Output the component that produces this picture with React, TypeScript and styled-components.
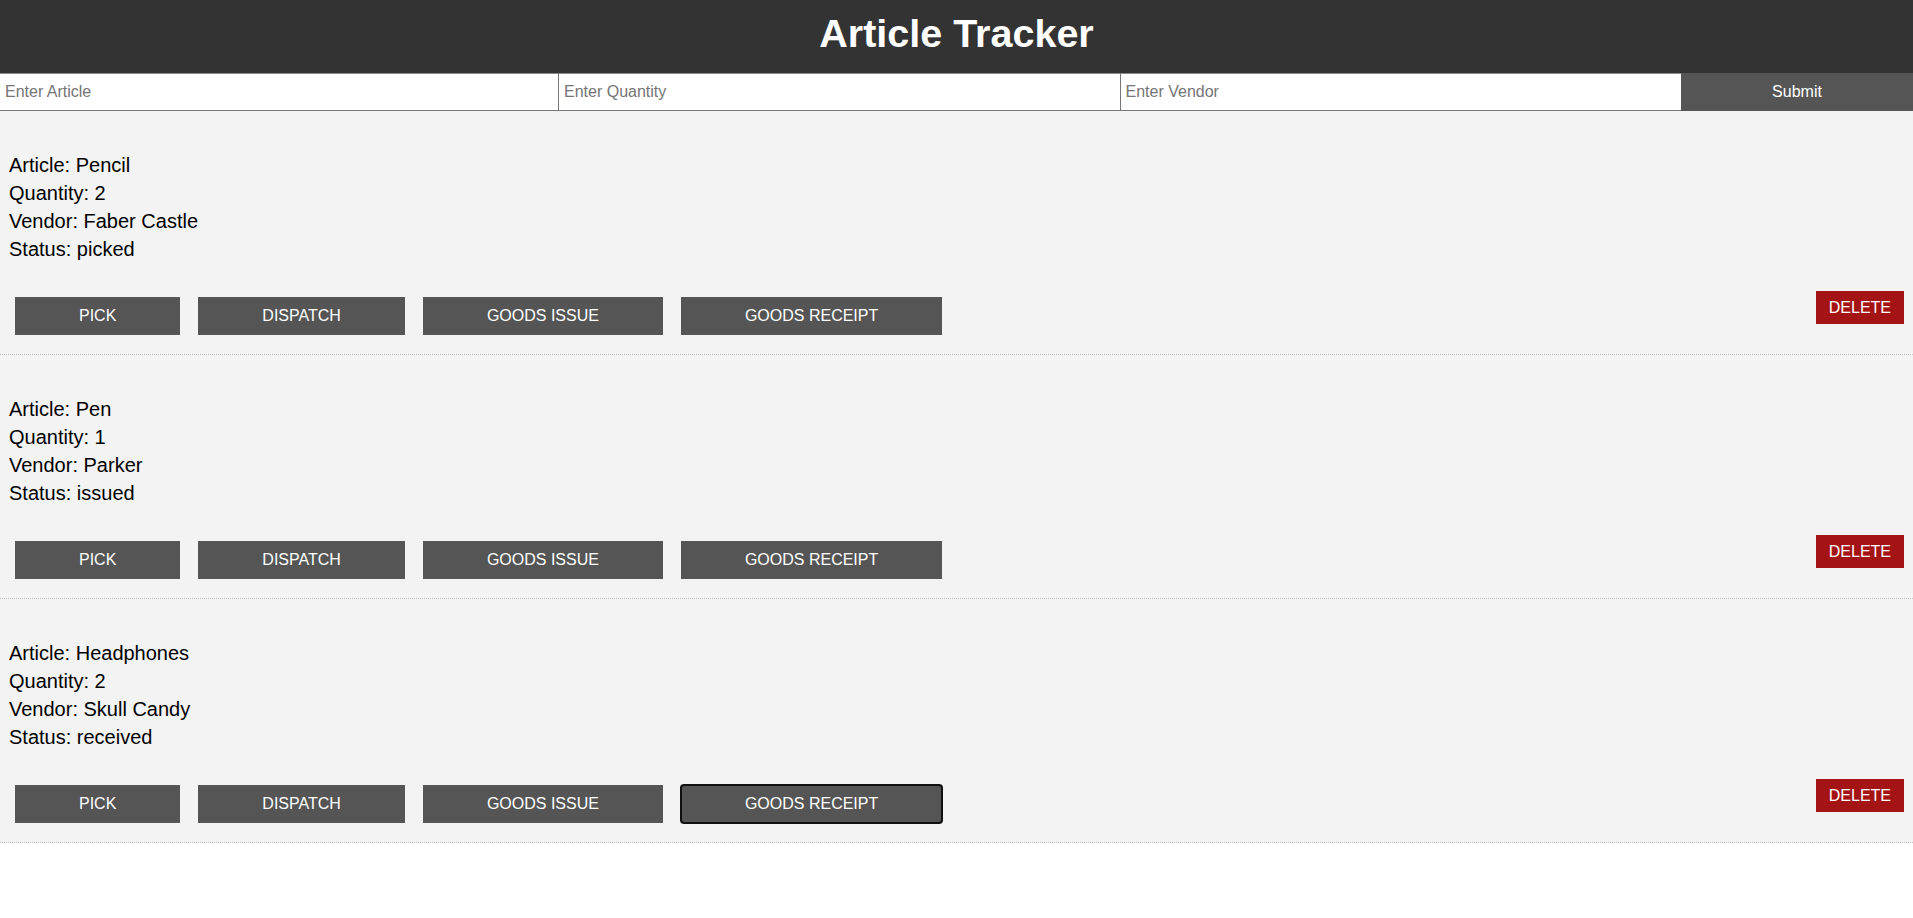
import React from 'react';
import styled, { createGlobalStyle } from 'styled-components';

const GlobalStyle = createGlobalStyle`
  html, body {
    margin: 0;
    padding: 0;
    background: #ffffff;
    font-family: "Liberation Sans", Arial, sans-serif;
  }
`;

type Article = {
  name: string;
  quantity: number;
  vendor: string;
  status: string;
};

const articles: Article[] = [
  { name: 'Pencil', quantity: 2, vendor: 'Faber Castle', status: 'picked' },
  { name: 'Pen', quantity: 1, vendor: 'Parker', status: 'issued' },
  { name: 'Headphones', quantity: 2, vendor: 'Skull Candy', status: 'received' },
];

const actions = ['PICK', 'DISPATCH', 'GOODS ISSUE', 'GOODS RECEIPT'];

const Header = styled.header`
  box-sizing: border-box;
  height: 73px;
  padding-top: 14px;
  background: #333333;
  display: flex;
  align-items: flex-start;
  justify-content: center;
`;

const Title = styled.h1`
  margin: 0;
  color: #ffffff;
  font-size: 39.5px;
  font-weight: 700;
  line-height: 1;
`;

const Form = styled.form`
  display: grid;
  grid-template-columns: 558px 1fr 1fr 232px;
  height: 38px;
`;

const Input = styled.input`
  box-sizing: border-box;
  height: 38px;
  margin: 0;
  padding: 0 5px;
  border: none;
  border-top: 1px solid #8a8a8a;
  border-bottom: 1px solid #767676;
  border-left: 1px solid #767676;
  background: #ffffff;
  font-family: "Liberation Sans", Arial, sans-serif;
  font-size: 16px;
  color: #111;
  outline: none;

  &:first-child {
    border-left: none;
  }

  &::placeholder {
    color: #757575;
  }
`;

const SubmitButton = styled.button`
  height: 38px;
  margin: 0;
  border: none;
  background: #555555;
  color: #ffffff;
  font-family: "Liberation Sans", Arial, sans-serif;
  font-size: 16px;
`;

const List = styled.main`
  background: #f3f3f3;
`;

const Card = styled.section`
  padding: 40px 9px 19px;
  border-bottom: 1px dotted #c4c4c4;
`;

const Line = styled.div`
  font-size: 20px;
  line-height: 28px;
  color: #000;
`;

const ActionRow = styled.div`
  display: flex;
  align-items: flex-start;
  margin-top: 28px;
`;

const ButtonGroup = styled.div`
  display: flex;
  gap: 18px;
  padding-left: 6px;
  margin-top: 6px;
`;

const ActionButton = styled.button<{ $focused?: boolean }>`
  box-sizing: border-box;
  height: 38px;
  padding: 0 63px;
  margin: 0;
  border: 1px solid #555555;
  background: #555555;
  color: #ffffff;
  font-family: "Liberation Sans", Arial, sans-serif;
  font-size: 16px;
  white-space: nowrap;
  ${(p) =>
    p.$focused &&
    `
    outline: 2px solid #101010;
    outline-offset: -1px;
    border-radius: 3px;
  `}
`;

const DeleteButton = styled.button`
  margin: 0 0 0 auto;
  height: 33px;
  padding: 0 13px;
  border: none;
  background: #a51414;
  color: #ffffff;
  font-family: "Liberation Sans", Arial, sans-serif;
  font-size: 16px;
`;

function ArticleCard({ article, focusedAction }: { article: Article; focusedAction?: string }) {
  return (
    <Card>
      <Line>Article: {article.name}</Line>
      <Line>Quantity: {article.quantity}</Line>
      <Line>Vendor: {article.vendor}</Line>
      <Line>Status: {article.status}</Line>
      <ActionRow>
        <ButtonGroup>
          {actions.map((a) => (
            <ActionButton key={a} $focused={a === focusedAction}>
              {a}
            </ActionButton>
          ))}
        </ButtonGroup>
        <DeleteButton>DELETE</DeleteButton>
      </ActionRow>
    </Card>
  );
}

export default function App() {
  return (
    <>
      <GlobalStyle />
      <Header>
        <Title>Article Tracker</Title>
      </Header>
      <Form onSubmit={(e) => e.preventDefault()}>
        <Input placeholder="Enter Article" />
        <Input placeholder="Enter Quantity" />
        <Input placeholder="Enter Vendor" />
        <SubmitButton type="submit">Submit</SubmitButton>
      </Form>
      <List>
        {articles.map((a, i) => (
          <ArticleCard
            key={a.name}
            article={a}
            focusedAction={i === articles.length - 1 ? 'GOODS RECEIPT' : undefined}
          />
        ))}
      </List>
    </>
  );
}
